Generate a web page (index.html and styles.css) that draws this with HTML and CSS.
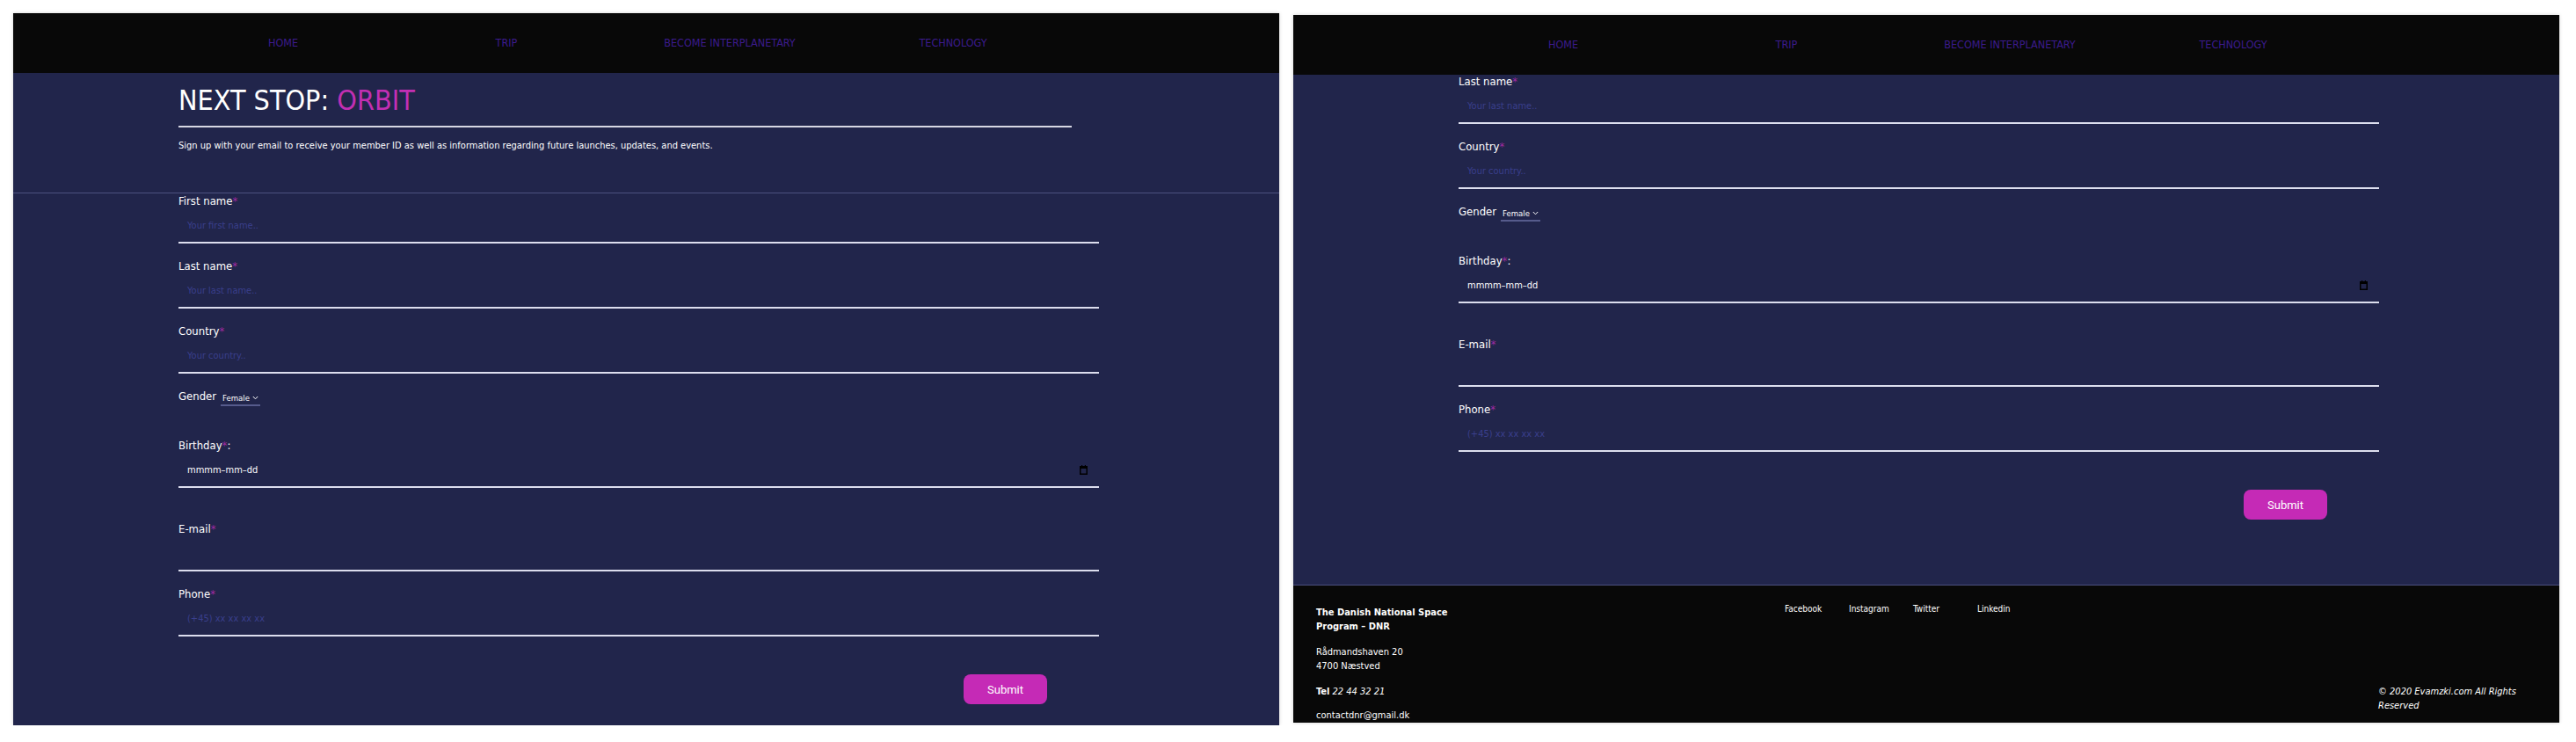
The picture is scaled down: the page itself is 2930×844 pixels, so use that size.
FILE: index.html
```html
<!DOCTYPE html>
<html lang="en">
<head>
<meta charset="utf-8">
<title>Next Stop: Orbit</title>
<link rel="stylesheet" href="styles.css">
</head>
<body>
<div class="screens">

  <div class="screen screen-a">
    <nav class="topnav">
      <a href="#">HOME</a>
      <a href="#">TRIP</a>
      <a href="#">BECOME INTERPLANETARY</a>
      <a href="#">TECHNOLOGY</a>
    </nav>
    <div class="viewport">
      <section class="hero">
        <h1>NEXT STOP: <span class="accent">ORBIT</span></h1>
        <hr class="rule">
        <p class="intro">Sign up with your email to receive your member ID as well as information regarding future launches, updates, and events.</p>
      </section>
      <form class="signup">
        <div class="field">
          <label>First name<span class="req">*</span></label>
          <div class="input"><span class="ph">Your first name..</span></div>
        </div>
        <div class="field">
          <label>Last name<span class="req">*</span></label>
          <div class="input"><span class="ph">Your last name..</span></div>
        </div>
        <div class="field">
          <label>Country<span class="req">*</span></label>
          <div class="input"><span class="ph">Your country..</span></div>
        </div>
        <div class="gender">
          <label>Gender</label>
          <span class="select">Female <svg width="7" height="5" viewBox="0 0 7 5"><path d="M0.8 1 L3.5 3.8 L6.2 1" fill="none" stroke="#fff" stroke-width="1"/></svg></span>
        </div>
        <div class="field field-date">
          <label>Birthday<span class="req">*</span>:</label>
          <div class="input date"><span class="val">mmmm–mm–dd</span>
            <svg class="cal" width="9" height="11" viewBox="0 0 9 11"><rect x="0.75" y="1.75" width="7.5" height="8.5" fill="none" stroke="#000" stroke-width="1.5"/><rect x="0.5" y="1.5" width="8" height="2.5" fill="#000"/><rect x="2" y="0" width="1.2" height="2" fill="#000"/><rect x="5.8" y="0" width="1.2" height="2" fill="#000"/></svg>
          </div>
        </div>
        <div class="field">
          <label>E-mail<span class="req">*</span></label>
          <div class="input"></div>
        </div>
        <div class="field">
          <label>Phone<span class="req">*</span></label>
          <div class="input"><span class="ph">(+45) xx xx xx xx</span></div>
        </div>
        <div class="actions"><button type="button" class="submit">Submit</button></div>
      </form>
    </div>
  </div>

  <div class="screen screen-b">
    <nav class="topnav">
      <a href="#">HOME</a>
      <a href="#">TRIP</a>
      <a href="#">BECOME INTERPLANETARY</a>
      <a href="#">TECHNOLOGY</a>
    </nav>
    <div class="viewport">
      <form class="signup continued">
        <div class="field">
          <label>Last name<span class="req">*</span></label>
          <div class="input"><span class="ph">Your last name..</span></div>
        </div>
        <div class="field">
          <label>Country<span class="req">*</span></label>
          <div class="input"><span class="ph">Your country..</span></div>
        </div>
        <div class="gender">
          <label>Gender</label>
          <span class="select">Female <svg width="7" height="5" viewBox="0 0 7 5"><path d="M0.8 1 L3.5 3.8 L6.2 1" fill="none" stroke="#fff" stroke-width="1"/></svg></span>
        </div>
        <div class="field field-date">
          <label>Birthday<span class="req">*</span>:</label>
          <div class="input date"><span class="val">mmmm–mm–dd</span>
            <svg class="cal" width="9" height="11" viewBox="0 0 9 11"><rect x="0.75" y="1.75" width="7.5" height="8.5" fill="none" stroke="#000" stroke-width="1.5"/><rect x="0.5" y="1.5" width="8" height="2.5" fill="#000"/><rect x="2" y="0" width="1.2" height="2" fill="#000"/><rect x="5.8" y="0" width="1.2" height="2" fill="#000"/></svg>
          </div>
        </div>
        <div class="field">
          <label>E-mail<span class="req">*</span></label>
          <div class="input"></div>
        </div>
        <div class="field">
          <label>Phone<span class="req">*</span></label>
          <div class="input"><span class="ph">(+45) xx xx xx xx</span></div>
        </div>
        <div class="actions"><button type="button" class="submit">Submit</button></div>
      </form>
      <footer class="site-footer">
        <div class="f-info">
          <p class="f-name">The Danish National Space Program – DNR</p>
          <p class="f-addr">Rådmandshaven 20<br>4700 Næstved</p>
          <p class="f-tel"><b>Tel</b> <i>22 44 32 21</i></p>
          <p class="f-mail">contactdnr@gmail.dk</p>
        </div>
        <div class="f-social">
          <a href="#">Facebook</a><a href="#">Instagram</a><a href="#">Twitter</a><a href="#">Linkedin</a>
        </div>
        <div class="f-copy"><i>© 2020 Evamzki.com All Rights Reserved</i></div>
      </footer>
    </div>
  </div>

</div>
</body>
</html>
```

FILE: styles.css
```css
* { box-sizing: border-box; }

html, body {
  margin: 0;
  padding: 0;
  background: #ffffff;
}

body {
  font-family: "DejaVu Sans Condensed", "DejaVu Sans", sans-serif;
  font-stretch: condensed;
  color: #ffffff;
}

.screens {
  display: flex;
  align-items: flex-start;
  gap: 16px;
  padding: 15px 0 0 15px;
}

.screen {
  width: 1440px;
  background: #21254b;
  box-shadow: 0 0 4px rgba(0, 0, 0, 0.18);
  display: flex;
  flex-direction: column;
  overflow: hidden;
}

.screen-a { height: 810px; }
.screen-b { height: 805px; margin-top: 2px; }

/* navigation */
.topnav {
  flex: 0 0 68px;
  height: 68px;
  background: #080808;
  display: grid;
  grid-template-columns: repeat(4, 254px);
  align-items: center;
  padding-left: 180px;
}

.topnav a {
  text-align: center;
  color: #3c1b8e;
  font-size: 12.5px;
  text-decoration: none;
  line-height: 14px;
}

.viewport {
  flex: 1 1 auto;
  overflow: hidden;
}

/* hero */
.hero {
  height: 137px;
  padding: 13px 0 0 188px;
  border-bottom: 1px solid #4c517f;
}

.hero h1 {
  margin: 0;
  font-size: 32px;
  font-weight: normal;
  line-height: 37px;
  color: #ffffff;
}

.accent { color: #c22fb3; }

.rule {
  width: 1016px;
  margin: 10px 0 0 0;
  border: 0;
  height: 2px;
  background: #d6d7e3;
}

.intro {
  margin: 14px 0 0 0;
  font-size: 11px;
  line-height: 14px;
}

/* form */
.signup {
  padding: 1px 0 74px 188px;
  width: 1235px;
}

.signup.continued { padding-top: 0; }

.field { margin-bottom: 18px; }
.field-date { margin-bottom: 39px; }

.field label,
.gender label {
  display: block;
  font-size: 13px;
  line-height: 16px;
  color: #ffffff;
}

.req { color: #9f2aa0; }

.input {
  height: 40px;
  border-bottom: 2px solid #dcdeee;
  display: flex;
  align-items: center;
  padding: 0 13px 0 10px;
  font-size: 11px;
}

.ph { color: #3a3f8c; }

.date { justify-content: space-between; }
.date .val { color: #ffffff; font-size: 11px; }
.cal { display: block; }

.gender {
  display: flex;
  align-items: center;
  gap: 5px;
  height: 16px;
  margin-bottom: 40px;
}

.gender label { display: inline-block; }

.select {
  display: inline-flex;
  align-items: center;
  gap: 3px;
  font-size: 9.5px;
  line-height: 12px;
  padding: 3px 2px 1px 2px;
  border-bottom: 2px solid #565b8c;
  margin-top: 3px;
}

.actions {
  display: flex;
  justify-content: flex-end;
  padding-right: 59px;
  margin-top: 43px;
}

.submit {
  width: 95px;
  height: 34px;
  border: 0;
  border-radius: 8px;
  background: #c52ab6;
  color: #ffffff;
  font-family: Roboto, "Liberation Sans", sans-serif;
  font-size: 13px;
}

/* footer */
.site-footer {
  background: #080808;
  border-top: 1px solid #4c517f;
  display: grid;
  grid-template-columns: 533px 675px 180px;
  padding: 0 0 20px 26px;
  font-size: 11px;
  line-height: 16px;
}

.site-footer p { margin: 0; }

.f-info { padding-top: 23px; }

.f-name {
  width: 160px;
  font-weight: bold;
}

.f-addr { margin-top: 13px !important; }
.f-tel { margin-top: 13px !important; }
.f-mail { margin-top: 11px !important; }

.f-social {
  display: grid;
  grid-template-columns: repeat(4, 73px);
  align-content: start;
  padding-top: 19px;
}

.f-social a {
  color: #ffffff;
  text-decoration: none;
  font-size: 10px;
}

.f-copy {
  padding-top: 113px;
  width: 175px;
}
```
